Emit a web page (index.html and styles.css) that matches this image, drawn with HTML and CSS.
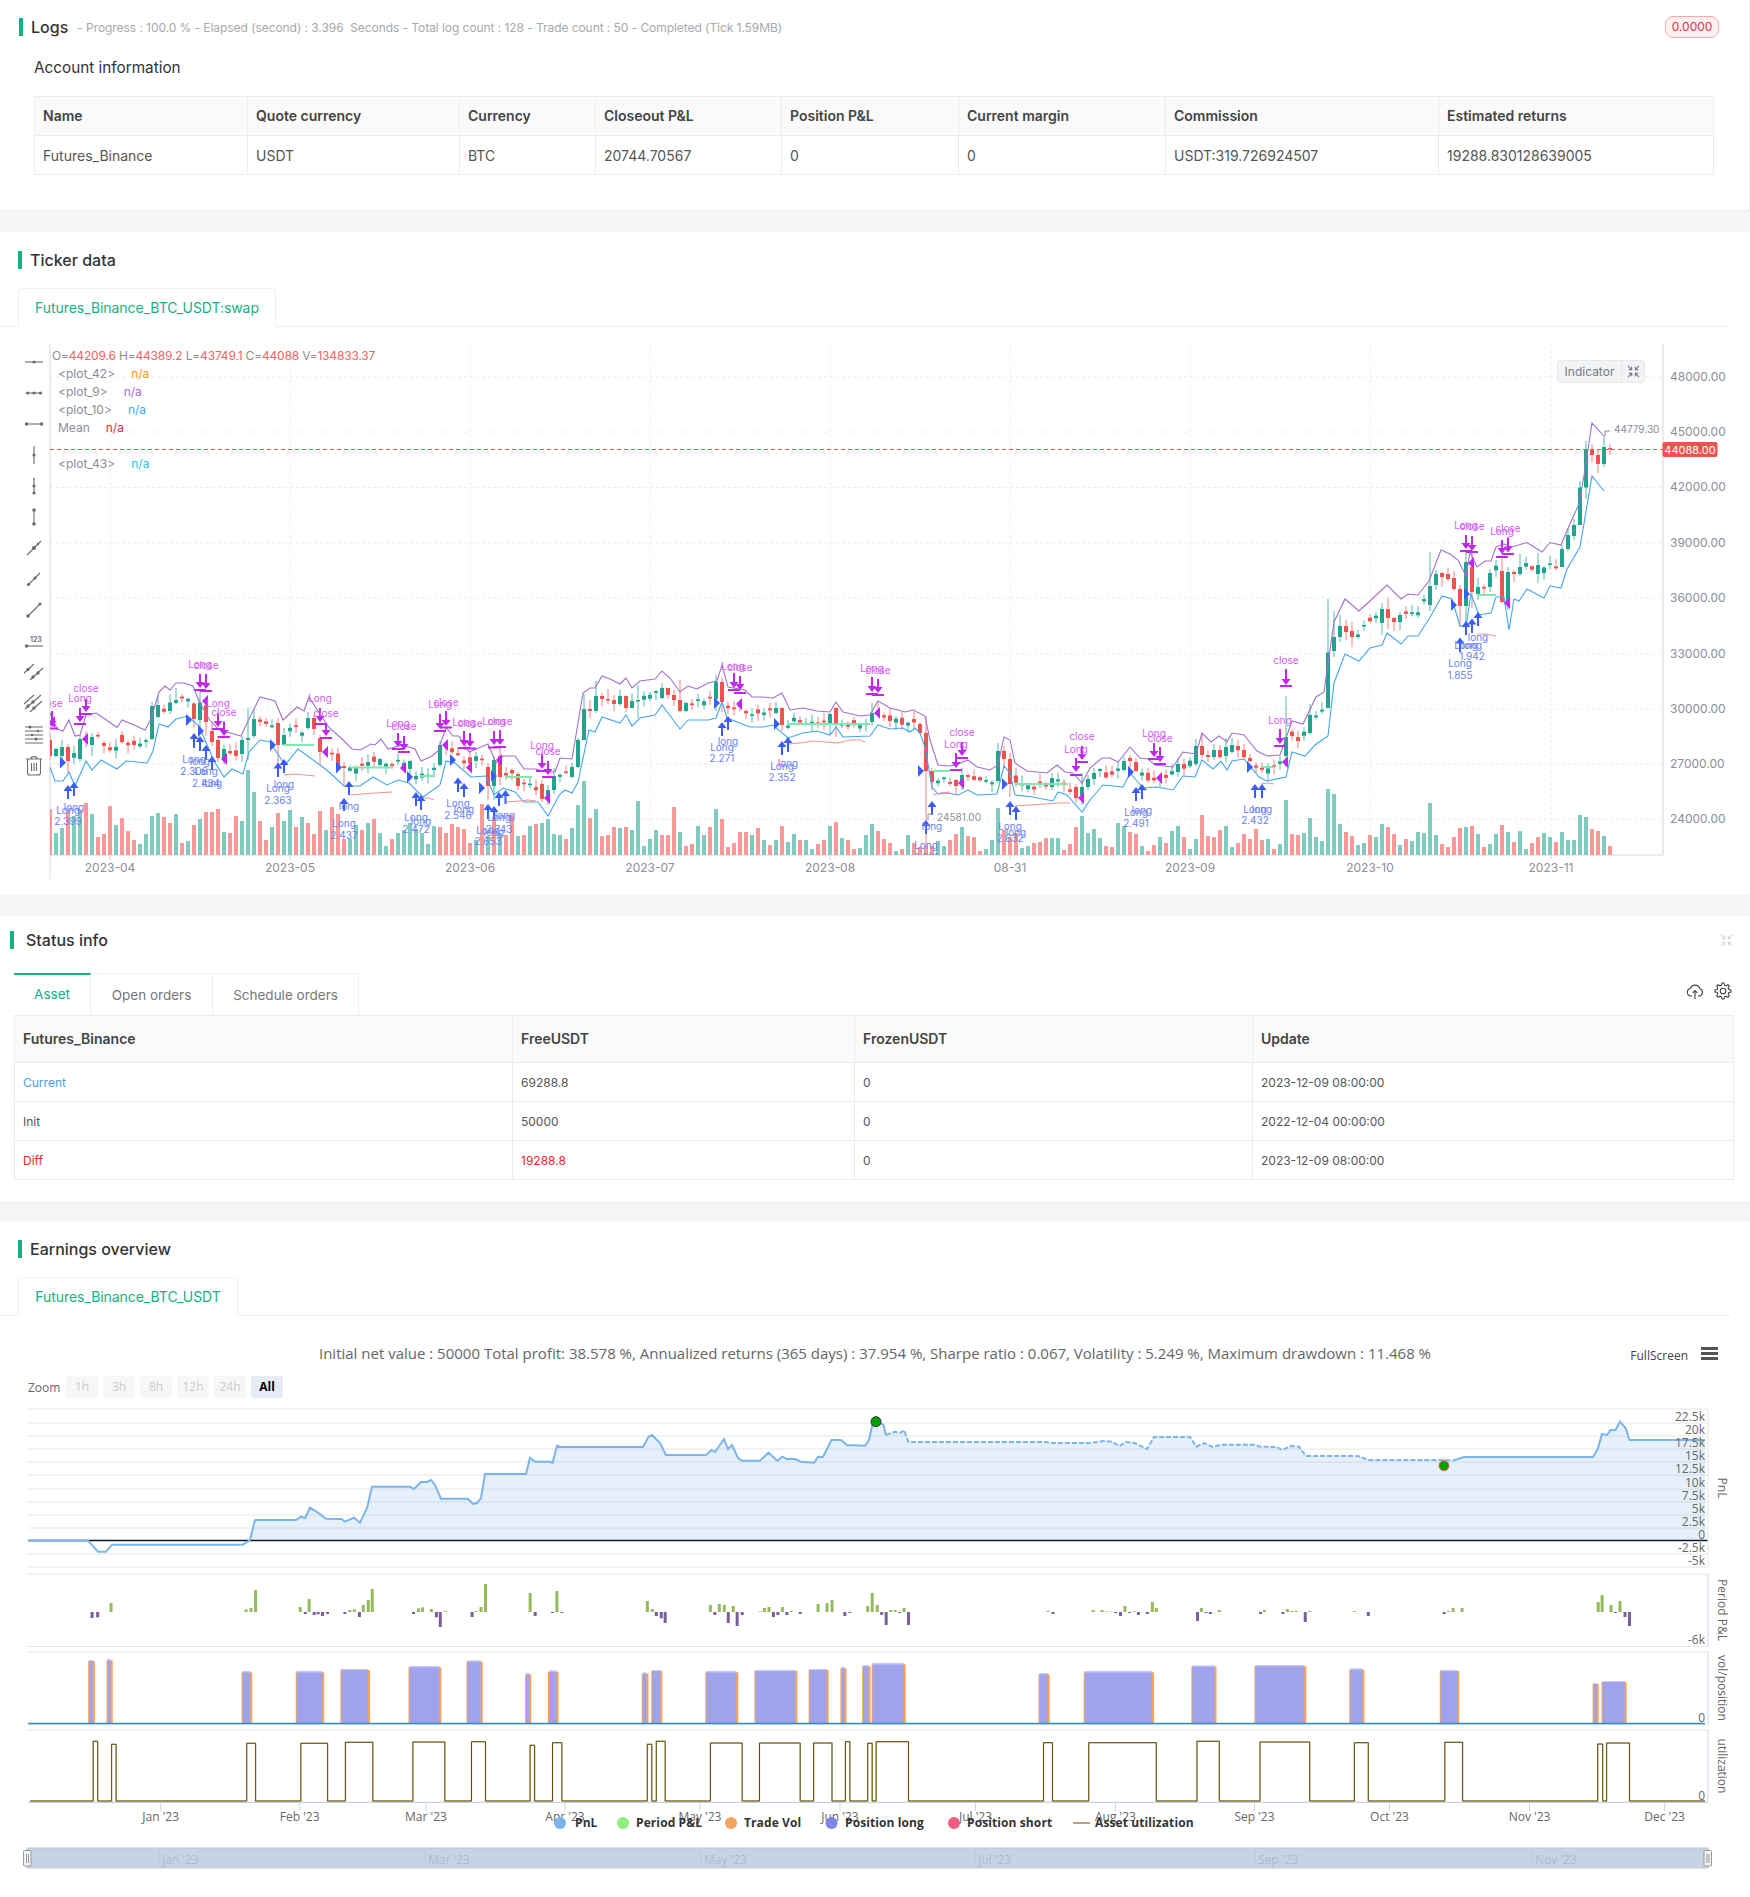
FILE: index.html
```html
<!DOCTYPE html>
<html lang="en">
<head>
<meta charset="utf-8">
<title>Backtest result</title>
<link rel="stylesheet" href="styles.css">
</head>
<body>
<section class="card card-logs">
  <div class="head">
    <span class="bar"></span>
    <h2 class="title">Logs</h2>
    <span class="progress">- Progress : 100.0 % - Elapsed (second) : 3.396 &nbsp;Seconds - Total log count : 128 - Trade count : 50 - Completed (Tick 1.59MB)</span>
    <span class="badge">0.0000</span>
  </div>
  <h3 class="sub">Account information</h3>
  <table class="grid account">
    <colgroup><col class="a1"><col class="a2"><col class="a3"><col class="a4"><col class="a5"><col class="a6"><col class="a7"><col class="a8"></colgroup>
    <thead><tr><th>Name</th><th>Quote currency</th><th>Currency</th><th>Closeout P&amp;L</th><th>Position P&amp;L</th><th>Current margin</th><th>Commission</th><th>Estimated returns</th></tr></thead>
    <tbody><tr><td>Futures_Binance</td><td>USDT</td><td>BTC</td><td>20744.70567</td><td>0</td><td>0</td><td>USDT:319.726924507</td><td>19288.830128639005</td></tr></tbody>
  </table>
</section>

<section class="card card-ticker">
  <div class="head"><span class="bar"></span><h2 class="title">Ticker data</h2></div>
  <div class="tabline"><span class="tab tab-ticker">Futures_Binance_BTC_USDT:swap</span></div>
  <div class="kline">
    <svg id="kline-svg" class="chart-svg" viewBox="0 340 1750 555" width="1750" height="555"></svg>
    <div class="tools">
      <svg class="tool" viewBox="0 0 24 24"><path d="M3 12H21"/><circle cx="12" cy="12" r="1.6"/></svg>
      <svg class="tool" viewBox="0 0 24 24"><path d="M4 12H20"/><circle cx="5.5" cy="12" r="1.6"/><circle cx="12" cy="12" r="1.6"/><circle cx="18.5" cy="12" r="1.6"/></svg>
      <svg class="tool" viewBox="0 0 24 24"><path d="M4 12H20"/><circle cx="4.5" cy="12" r="1.8"/><circle cx="19.5" cy="12" r="1.8"/></svg>
      <svg class="tool" viewBox="0 0 24 24"><path d="M12 3V21"/><circle cx="12" cy="12" r="1.6"/></svg>
      <svg class="tool" viewBox="0 0 24 24"><path d="M12 4V20"/><circle cx="12" cy="12" r="1.6"/><circle cx="12" cy="19" r="1.6"/><circle cx="12" cy="5" r="0.8"/></svg>
      <svg class="tool" viewBox="0 0 24 24"><path d="M12 5V19"/><circle cx="12" cy="5" r="1.8"/><circle cx="12" cy="19" r="1.8"/></svg>
      <svg class="tool" viewBox="0 0 24 24"><path d="M5 19L19 5"/><circle cx="12" cy="12" r="2"/><circle cx="16" cy="8" r="1.2"/></svg>
      <svg class="tool" viewBox="0 0 24 24"><path d="M6 18L18 6"/><circle cx="6.500" cy="17.500" r="1.600"/><circle cx="13" cy="11" r="1.600"/></svg>
      <svg class="tool" viewBox="0 0 24 24"><path d="M6 18L18 6"/><circle cx="6" cy="18" r="1.800"/><circle cx="18" cy="6" r="1.500"/></svg>
      <svg class="tool" viewBox="0 0 24 24"><path d="M4 17H21"/><circle cx="4.5" cy="17" r="1.7"/><text class="tool-text" x="8" y="13">123</text></svg>
      <svg class="tool" viewBox="0 0 24 24"><path d="M2 13L12 4M8 20L21 8"/><circle cx="6" cy="9.500" r="1.700"/><circle cx="11" cy="17" r="1.700"/><circle cx="16" cy="13" r="1.700"/></svg>
      <svg class="tool" viewBox="0 0 24 24"><path d="M2 13L12 4M3 18L19 4M8 21L20 10"/><circle cx="6" cy="15" r="1.700"/><circle cx="11" cy="11" r="1.700"/><circle cx="12" cy="17" r="1.700"/></svg>
      <svg class="tool" viewBox="0 0 24 24"><path d="M3 5H21M3 9H21M3 13H21M3 17H21M3 21H21"/><circle cx="8" cy="5" r="1.5"/><circle cx="16" cy="9" r="1.2"/><circle cx="10" cy="13" r="1.2"/><circle cx="14" cy="17" r="1.5"/></svg>
      <svg class="tool" viewBox="0 0 24 24"><path d="M4 6H20M9 5.500C9 3 15 3 15 5.500M5.500 6.500V20Q5.500 22 8 22H16Q18.500 22 18.500 20V6.500M9.500 10V18M12 10V18M14.500 10V18"/></svg>
    </div>
    <div class="legend">
      <div class="ohlc">O=<b>44209.6</b> H=<b>44389.2</b> L=<b>43749.1</b> C=<b>44088</b> V=<b>134833.37</b></div>
      <div class="plot">&lt;plot_42&gt;<em class="c-orange">n/a</em></div>
      <div class="plot">&lt;plot_9&gt;<em class="c-purple">n/a</em></div>
      <div class="plot">&lt;plot_10&gt;<em class="c-blue">n/a</em></div>
      <div class="plot">Mean<em class="c-pink">n/a</em></div>
      <div class="plot plot-gap">&lt;plot_43&gt;<em class="c-teal">n/a</em></div>
    </div>
    <div class="indicator">
      <span class="ind-label">Indicator</span>
      <span class="ind-icon"><svg class="expand" viewBox="0 0 14 14"><path d="M1 1L5 5M5 2V5H2M13 1L9 5M9 2V5H12M1 13L5 9M5 12V9H2M13 13L9 9M9 12V9H12"/></svg></span>
    </div>
  </div>
</section>

<section class="card card-status">
  <div class="head head-status">
    <span class="bar"></span><h2 class="title">Status info</h2>
    <svg class="expand expand-light" viewBox="0 0 14 14"><path d="M1 1L5 5M5 2V5H2M13 1L9 5M9 2V5H12M1 13L5 9M5 12V9H2M13 13L9 9M9 12V9H12"/></svg>
  </div>
  <div class="status-tabs">
    <span class="stab stab-on">Asset</span><span class="stab stab-open">Open orders</span><span class="stab stab-sched">Schedule orders</span>
    <span class="status-icons">
      <svg class="act" viewBox="0 0 18 18"><path d="M6 14H5A3.800 3.800 0 0 1 4.300 6.500 5 5 0 0 1 13.800 6.600 3.800 3.800 0 0 1 13 14H12M9 17V8.500M6.800 10.800L9 8.500 11.200 10.800"/></svg>
      <svg class="act" viewBox="0 0 18 18"><path d="M8 1H10L10.500 3.200 12 3.800 14 2.700 15.300 4 14.200 6 14.800 7.500 17 8V10L14.800 10.500 14.200 12 15.300 14 14 15.300 12 14.200 10.500 14.800 10 17H8L7.500 14.800 6 14.200 4 15.300 2.700 14 3.800 12 3.200 10.500 1 10V8L3.200 7.500 3.800 6 2.700 4 4 2.700 6 3.800 7.500 3.200Z"/><circle cx="9" cy="9" r="2.800"/></svg>
    </span>
  </div>
  <table class="grid status">
    <colgroup><col class="s1"><col class="s2"><col class="s3"><col class="s4"></colgroup>
    <thead><tr><th>Futures_Binance</th><th>FreeUSDT</th><th>FrozenUSDT</th><th>Update</th></tr></thead>
    <tbody>
      <tr><td class="c-link">Current</td><td>69288.8</td><td>0</td><td>2023-12-09 08:00:00</td></tr>
      <tr><td>Init</td><td>50000</td><td>0</td><td>2022-12-04 00:00:00</td></tr>
      <tr><td class="c-red">Diff</td><td class="c-red">19288.8</td><td>0</td><td>2023-12-09 08:00:00</td></tr>
    </tbody>
  </table>
</section>

<section class="card card-earn">
  <div class="head"><span class="bar"></span><h2 class="title">Earnings overview</h2></div>
  <div class="tabline"><span class="tab tab-earn">Futures_Binance_BTC_USDT</span></div>
  <div class="summary">
    <span></span>
    <span class="summary-text">Initial net value : 50000 Total profit: 38.578 %, Annualized returns (365 days) : 37.954 %, Sharpe ratio : 0.067, Volatility : 5.249 %, Maximum drawdown : 11.468 %</span>
    <span class="fullscreen">FullScreen<span class="burger"><i></i><i></i><i></i></span></span>
  </div>
  <div class="zoom">
    <span class="zoom-label">Zoom</span>
    <span class="zbtn">1h</span><span class="zbtn">3h</span><span class="zbtn">8h</span><span class="zbtn">12h</span><span class="zbtn">24h</span><span class="zbtn zbtn-on">All</span>
  </div>
  <svg id="earn-svg" class="chart-svg" viewBox="0 1399 1750 497" width="1750" height="497"></svg>
</section>
<script src="chart.js"></script>
</body>
</html>
```
FILE: styles.css
```css
* { box-sizing: border-box; }
html, body { margin: 0; padding: 0; }
body { background: #f4f5f7; font-family: Inter, "Noto Sans", sans-serif; color: #444; width: 1750px; }
.card { background: #fff; border-bottom: 1px solid #eef0f2; }
.card-logs { height: 211px; padding-top: 18px; margin-bottom: 21px; border-right: 1px solid #eee; }
.card-ticker { height: 663px; padding-top: 19px; margin-bottom: 21px; border-bottom: 0; }
.card-status { height: 285px; padding-top: 15px; margin-bottom: 20px; border-bottom: 0; }
.card-earn { height: 676px; padding-top: 19px; border-bottom: 0; }
.head { display: flex; align-items: center; height: 18px; padding-left: 18px; gap: 8px; }
.card-logs .head { padding-left: 19px; padding-right: 30px; }
.head-status { padding-left: 10px; gap: 12px; padding-right: 17px; }
.bar { width: 4px; height: 18px; background: #14b184; flex: none; }
.title { margin: 0; font-size: 16px; font-weight: 500; color: #333; line-height: 18px; }
.progress { font-size: 12px; color: #a8a8a8; margin-left: 1px; white-space: pre; letter-spacing: -0.06px; }
.badge { margin-left: auto; height: 22px; width: 54px; border: 1px solid #ffa8a8; background: #fff1f0; border-radius: 8px; color: #e8304a; font-size: 12px; line-height: 20px; text-align: center; }
.sub { margin: 20px 0 16px 34px; font-size: 15.300px; font-weight: 400; line-height: 24px; color: #333; }
.grid { border-collapse: collapse; table-layout: fixed; font-size: 14px; color: #555; }
.grid th { background: #fafafa; text-align: left; font-weight: 600; color: #444; padding-bottom: 2px; }
.grid th, .grid td { border: 1px solid #ececec; padding-left: 8px; padding-right: 8px; white-space: nowrap; }
.account { margin-left: 34px; width: 1679px; }
.account th, .account td { height: 39px; }
.a1 { width: 213px; } .a2 { width: 212px; } .a3 { width: 136px; } .a4 { width: 186px; }
.a5 { width: 177px; } .a6 { width: 207px; } .a7 { width: 273px; } .a8 { width: 275px; }
.tabline { margin: 19px 20px 0 0; padding-left: 18px; height: 39px; border-bottom: 1px solid #eaecef; display: flex; }
.tab { height: 39px; border: 1px solid #eef0f2; border-bottom: 1px solid #fff; border-radius: 4px 4px 0 0; color: #14b184; font-size: 14px; line-height: 37px; text-align: center; letter-spacing: -0.07px; }
.tab-ticker { width: 258px; }
.tab-earn { width: 220px; }
.kline { position: relative; height: 555px; margin-top: 13px; }
.chart-svg { display: block; }
.tools { position: absolute; left: 22px; top: 10px; display: flex; flex-direction: column; }
.tool { width: 24px; height: 24px; margin-bottom: 7px; fill: none; stroke: #686b75; stroke-width: 1.100; }
.tool circle { fill: #686b75; stroke: none; }
.tool-text { font-family: Inter, sans-serif; font-size: 7px; font-weight: 600; fill: #686b75; stroke: none; }
.legend { position: absolute; left: 52px; top: 7px; font-size: 12px; line-height: 18px; color: #8a8e97; }
.ohlc { height: 18px; white-space: nowrap; letter-spacing: -0.17px; }
.ohlc b { font-weight: 400; color: #f26461; }
.plot { height: 18px; padding-left: 6px; display: flex; gap: 16px; }
.plot em { font-style: normal; }
.plot-gap { margin-top: 18px; }
.c-orange { color: #ff9800; } .c-purple { color: #a66cd6; } .c-blue { color: #42a5f5; } .c-pink { color: #e91e63; } .c-teal { color: #26c6da; }
.indicator { position: absolute; left: 1557px; top: 20px; width: 88px; height: 23px; display: flex; background: #f2f3f5; border: 1px solid #e6e8eb; border-radius: 4px; font-size: 12px; color: #787b86; }
.ind-label { width: 64px; line-height: 21px; text-align: center; border-right: 1px solid #e6e8eb; }
.ind-icon { flex: 1; display: flex; align-items: center; justify-content: center; }
.expand { width: 13px; height: 13px; fill: none; stroke: #787b86; stroke-width: 1.200; }
.expand-light { margin-left: auto; stroke: #d5d7db; }
.status-tabs { display: flex; margin: 24px 0 0 14px; height: 42px; width: 1719px; align-items: stretch; }
.stab { width: 122px; border: 1px solid #eef0f2; border-left: 0; border-bottom: 0; font-size: 13.500px; line-height: 42px; color: #777; text-align: center; }
.stab-sched { width: 146px; }
.stab-on { width: 77px; color: #14b184; border-top: 2px solid #14b184; border-left: 0; line-height: 39px; }
.status-icons { margin-left: auto; display: flex; align-items: center; gap: 10px; padding-right: 1px; margin-top: -6px; }
.act { width: 18px; height: 18px; fill: none; stroke: #444; stroke-width: 1.100; }
.status { margin-left: 14px; width: 1719px; font-size: 12px; }
.status th { height: 47px; font-size: 14px; }
.status td { height: 39px; }
.s1 { width: 498px; } .s2 { width: 342px; } .s3 { width: 398px; } .s4 { width: 481px; }
.c-link { color: #4b9cf0; }
.c-red { color: #f5222d; }
.summary { display: grid; grid-template-columns: 1fr auto 1fr; align-items: center; height: 40px; margin-top: 17px; margin-bottom: 1px; font-family: "Open Sans", sans-serif; }
.summary-text { font-size: 15px; color: #666; white-space: nowrap; }
.fullscreen { justify-self: end; display: flex; align-items: center; gap: 13px; padding-right: 32px; font-size: 12px; color: #444; margin-top: 5px; }
.burger { display: flex; flex-direction: column; gap: 2px; width: 17px; margin-top: -4px; }
.burger i { display: block; height: 3px; background: #555; }
.zoom { display: flex; align-items: center; gap: 5px; height: 22px; margin: 3px 0 1px 28px; font-family: "Open Sans", sans-serif; font-size: 12px; }
.zoom-label { width: 33px; color: #666; }
.zbtn { width: 32px; height: 22px; background: #f7f7f7; color: #ccc; line-height: 22px; text-align: center; border-radius: 2px; }
.zbtn-on { background: #e6ebf5; color: #000; font-weight: 700; }
.price-text { font-family: Inter, sans-serif; font-size: 12px; fill: #8a8e97; }
.mk-text { font-family: Inter, sans-serif; font-size: 10px; text-anchor: middle; }
.mk-buy { fill: #6a82f8; }
.mk-sell { fill: #d25cf2; }
.last-text { font-family: Inter, sans-serif; font-size: 11px; fill: #fff; text-anchor: middle; }
.hi-text { font-family: Inter, sans-serif; font-size: 10px; fill: #8a8e97; }
.hc-label { font-family: "Open Sans", sans-serif; font-size: 12px; fill: #666; }
.hc-end { text-anchor: end; }
.hc-mid { text-anchor: middle; }
.hc-title { font-family: "Open Sans", sans-serif; font-size: 12px; fill: #666; text-anchor: middle; }
.hc-nav { font-family: "Open Sans", sans-serif; font-size: 12px; fill: #aebbcd; }
.hc-legend { font-family: "Open Sans", sans-serif; font-size: 12px; font-weight: 700; fill: #333; letter-spacing: 0.1px; }
```
FILE: chart.js
```js
(function () {
  var pts = function (s) { return s.trim().split(/\s+/).map(function (p) { var a = p.split(','); return [+a[0], +a[1]]; }); };
  var interp = function (P, x) {
    if (x <= P[0][0]) return P[0][1];
    for (var k = 1; k < P.length; k++) if (x <= P[k][0]) {
      var a = P[k - 1], b = P[k];
      return a[1] + (b[1] - a[1]) * (x - a[0]) / ((b[0] - a[0]) || 1);
    }
    return P[P.length - 1][1];
  };
  var poly = function (P) { return P.map(function (p) { return p[0] + ',' + p[1]; }).join(' '); };
  var seed = 12345;
  var rnd = function () { seed = (seed * 16807) % 2147483647; return seed / 2147483647; };

  /* ---------- candlestick chart ---------- */
  var upper = pts('50,713 57,729 63,731 69,720 75,736 80,735 86,715 96,713 105,719 117,727.5 122,720 134,725 145,730 151,719 159,692 165,686 170,690 176,683 184,683 193,686 199,701 209,719 218,729 230,733 241,736 249,719 260,697 275,701 283,720 297,707 304,711 309,697 316,708 329,727.5 341,738 352,749 360,750 371,744 375,745 381,739 388,749 402,745 415,749 421,761 432,756 438,751 446,727.5 453,736 459,736 469,752 488,744 496,763 503,756 515,756 524,769 536,769 547,772 555,772 560,758 572,759 583,693 590,688 595,688 602,676 610,679 620,684 626,678 632,688 640,681 655,679 662,671 670,678 680,692 688,686 697,689 708,683 717,681 722,665 728,687 745,690 752,697 763,697 773,698 782,693 790,710 803,708 817,711 830,712 836,702 843,712 860,716 870,715 878,701 890,708 898,710 905,712 913,710 925,716 930,740 938,765 950,766 958,764 968,760 977,767 990,770 998,765 1004,737 1010,740 1015,763 1027,771 1047,773 1057,765 1065,772 1073,773 1082,783 1090,768 1102,758 1110,758 1118,762 1130,747 1140,758 1148,759 1155,765 1173,767 1183,752 1196,754 1202,733 1211,742 1219,736 1227,742 1232,733 1244,735 1257,751 1267,756 1280,755 1292,721 1303,724 1316,697 1324,692 1334,622 1345,599 1359,611 1370,601 1387,585 1401,599 1408,594 1418,595 1429,581 1441,550 1450,554 1458,560 1466,576 1470,552 1477,567 1485,561 1491,561 1496,547 1504,544 1512,547 1527,542.5 1542,552 1550,542.5 1561,545 1569,526 1579,504 1584,476 1592,423 1604,436');
  var lower = pts('50,767 55,781 63,781 69,772 75,786 86,761 92,770 101,760 117,769 126,761 147,763 153,751 159,724 168,727 176,719 188,716 199,726 214,761 224,777 232,769 243,774 249,752 260,740 270,742 285,765 298,749 320,765 329,772 344,786 360,786 373,777 387,785 398,780 409,783 423,797 440,785 446,761 455,763 471,777 486,776 494,795 503,788 515,792 524,802 538,802 548,816 560,794 565,790 572,793 578,782 589,730 595,732 602,717 620,723 626,715 632,726 640,718 655,715 662,705 680,729 688,720 708,720 716,718 722,702 727,718 750,727 763,727 773,725 788,738 803,733 817,731 830,735 836,727 843,737 870,736 878,725 890,729 903,728 910,732 915,728 920,733 925,747 932,787 938,794 948,793 958,795 968,790 977,795 997,794 1004,766 1010,773 1015,795 1033,797 1053,801 1058,792 1067,795 1082,812 1090,800 1103,785 1123,787 1130,773 1143,788 1157,787 1173,790 1183,776 1195,777 1202,760 1213,769 1221,761 1227,770 1232,761 1244,759 1259,777 1267,781 1286,777 1292,752 1305,756 1315,745 1328,736 1334,683 1345,654 1359,661 1370,648 1382,645 1387,633 1401,644 1408,636 1418,636 1429,619 1442,596 1452,599 1460,626 1466,626 1471,594 1479,615 1491,613 1496,597 1504,597 1509,630 1514,599 1519,601 1527,589 1544,598 1550,586 1561,588 1567,569 1580,547 1592,476 1604,491');
  var vols = ('46r,22g,27g,44r,39g,45g,52r,41g,18r,21r,49r,30g,37r,24r,15r,11g,21g,39g,42g,38r,32r,41g,12r,14g,30r,36g,43r,43r,46r,23g,22r,39r,34g,85g,63g,34r,15r,28g,42r,34g,45g,28r,38g,32r,21r,44r,25g,48r,41r,16r,16g,30g,25r,32g,36r,22g,9g,16r,22g,25g,32g,26g,22g,11g,29g,28r,22r,31r,28r,26r,12r,15g,51r,19g,38r,22g,20r,40r,19g,20r,29g,31r,32g,36g,21g,20g,' +
    '16r,27g,50g,74g,37r,46g,19r,20r,28r,27g,28r,25g,54g,9g,16g,25g,20r,20r,48r,23g,9r,11r,29g,20g,28r,46g,36r,8r,12r,23r,23r,20g,27r,15g,10r,15g,29r,13g,21g,15r,15g,6g,11r,15r,29g,33r,17g,15r,6r,7g,20g,31g,24r,16r,12r,4g,' +
    '6r,20g,12r,8r,9r,9r,14g,9g,15r,21r,28g,19r,18r,4r,6g,15g,47g,25r,18r,22r,7g,9g,12r,13r,17r,17g,17g,5r,11r,28r,39g,22g,26g,17g,9r,8r,32g,29g,23r,21r,9g,4r,10r,18g,12r,24g,29g,18r,6g,16g,40r,19r,18r,25r,29g,' +
    '8g,12r,21r,16r,26r,15r,16g,6r,11g,55g,21r,20r,22g,37g,18g,14g,66g,61g,31g,23r,19r,10g,12g,20r,18g,31g,28r,21r,10g,16r,14g,23g,22g,52g,20g,11r,8r,18r,27r,28g,29r,21g,8r,11g,21g,30r,23g,13r,24g,6g,12r,18r,22g,18g,13r,23g,15g,15g,40g,38g,26r,24r,19g,9r').split(',');
  var big = {
    0:[740,756,733,760,'r'],2:[747,756,740,762,'g'],3:[747,761,744,772,'r'],5:[739,759,735,762,'g'],7:[737,745,733,756,'g'],
    17:[706,739,702,740,'g'],18:[705,717,696,718,'g'],20:[702.5,711,694,714,'g'],21:[700,703,688,704,'g'],
    24:[703.5,719,702,728,'r'],25:[702.5,720,690,732,'g'],26:[705,722,702,736,'r'],27:[731,742,722,746,'r'],28:[740,758,736,762,'r'],29:[749,758,745,764,'g'],
    32:[740,754,736,762,'g'],33:[738,740,708,760,'g'],34:[719,736,709,738,'g'],38:[723,745,718,765,'r'],39:[735,745,728,746,'g'],
    44:[718,729,715,735,'r'],43:[718,728,712,730,'g'],45:[738,752,735,765,'r'],48:[753.500,767,748,770,'r'],49:[766,768,762,785,'r'],
    65:[745,765,741,767,'g'],73:[767,786,763,800,'r'],74:[760,786,756,800,'g'],75:[756,777,747,785,'r'],78:[774,786,772,790,'r'],
    82:[784,799,780,802,'r'],83:[790,799,785,805,'g'],84:[776,790,768,794,'g'],
    87:[767,777,763,778,'g'],88:[740,767,738,768,'g'],89:[709,740,694,740,'g'],90:[709,711,700,718,'r'],91:[696,711,681,713,'g'],
    92:[696,699,693,706,'r'],93:[699,700,689,704,'r'],94:[700,704,695,711,'r'],95:[696,704,690,706,'g'],96:[696,708,696,712,'r'],97:[701,708,693,708,'g'],98:[700,701,685,718,'g'],
    102:[688,698,683,699,'g'],103:[688,695,688,699,'r'],104:[695,700,690,706,'r'],105:[700,711,680,712,'r'],106:[703,711,702,712,'g'],
    111:[682,699,675,711,'g'],112:[682,702,678,712,'r'],121:[708,713,702,714,'g'],122:[708,725,707,731,'r'],130:[714,723,713,735,'g'],131:[708,723,707,737,'r'],137:[713,722,703,726,'g'],
    145:[724,733,722,734,'r'],146:[733,771,716,853,'r'],147:[771,782,768,790,'r'],151:[780,786,779,795,'r'],152:[775,781,768,790,'g'],
    158:[751,781,743,783,'g'],159:[751,759,746,766,'r'],160:[759,784,753,797,'r'],167:[778,787,773,790,'g'],171:[787,798,784,803,'r'],172:[787,795,773,805,'g'],173:[779,787,775,790,'g'],174:[773,779,768,785,'g'],
    179:[761,770,757,772,'g'],180:[758,761,755,770,'r'],181:[762,771,758,772,'r'],188:[764,772,758,777,'g'],191:[746,764,739,766,'g'],192:[746,755,733,758,'r'],193:[755,757,750,762,'r'],194:[750,757,744,760,'g'],195:[750,757,745,759,'r'],196:[747,756,738,762,'g'],
    206:[737,756,696,767,'g'],210:[715,733,704,735,'g'],213:[652.500,708,599,708,'g'],214:[637,651,611,657,'g'],215:[626,637,615,642,'g'],216:[626,632,620,640,'r'],217:[631,637,622,647,'r'],
    222:[609,623,603,635,'g'],223:[609,618,598,629,'r'],224:[618,622,617,631,'r'],225:[615,622,612,630,'g'],230:[586,605,552,611,'g'],231:[574,585,570,590,'g'],232:[573,577,572,587,'r'],234:[578,589,571,591,'r'],235:[589,606,585,627,'r'],236:[562,606,551,622,'g'],237:[567,592,552,608,'r'],238:[587,594,578,600,'g'],240:[573,587,569,592,'g'],242:[571,602,556,603,'r'],243:[572,601,567,610,'g'],244:[572,574,570,582,'r'],245:[567,574,554,576,'g'],248:[565,574,553,583,'g'],
    252:[549,567,545,567,'g'],253:[535,549,528,551,'g'],254:[525,536,519,540,'g'],255:[487.500,525,481,525,'g'],256:[449,487.500,441,499,'g'],257:[449,455,444,462,'r'],258:[455,464,449,473,'r'],259:[447,464,436,467,'g'],260:[448,449,444,455,'r']
  };
  var s = '';
  var C = { g: '#22a38f', r: '#ef5350', gw: '#8dd0c5', rw: '#f8abaa', gv: '#80cbc0', rv: '#f79a97' };
  s += '<defs><clipPath id="cp"><rect x="50" y="344" width="1613" height="511"/></clipPath></defs>';
  var ticksY = [['48000.00',377],['45000.00',432],['42000.00',487.5],['39000.00',543],['36000.00',598],['33000.00',654],['30000.00',709],['27000.00',764],['24000.00',819]];
  var ticksX = [['2023-04',110],['2023-05',290],['2023-06',470],['2023-07',650],['2023-08',830],['08-31',1010],['2023-09',1190],['2023-10',1370],['2023-11',1551]];
  ticksY.forEach(function (t) {
    s += '<line x1="50" x2="1663" y1="' + t[1] + '" y2="' + t[1] + '" stroke="#ececec" stroke-dasharray="3 3"/>';
    s += '<text class="price-text" x="1670" y="' + (t[1] + 3.5) + '">' + t[0] + '</text>';
  });
  ticksX.forEach(function (t) {
    s += '<line x1="' + t[1] + '" x2="' + t[1] + '" y1="344" y2="855" stroke="#ececec" stroke-dasharray="3 3"/>';
    s += '<line x1="' + t[1] + '" x2="' + t[1] + '" y1="855" y2="860" stroke="#d5d7db"/>';
    s += '<text class="price-text hc-mid" x="' + t[1] + '" y="872">' + t[0] + '</text>';
  });
  s += '<line x1="50" x2="50" y1="344" y2="879" stroke="#d5d7db"/><line x1="1663" x2="1663" y1="344" y2="855" stroke="#d5d7db"/><line x1="50" x2="1663" y1="855" y2="855" stroke="#d5d7db"/>';
  s += '<g clip-path="url(#cp)">';
  vols.forEach(function (v, i) {
    var h = parseInt(v, 10), d = v.slice(-1), x = 50 + 6 * i;
    s += '<rect x="' + (x - 2) + '" y="' + (855 - h) + '" width="4" height="' + h + '" fill="' + C[d + 'v'] + '"/>';
  });
  vols.forEach(function (v, i) {
    var x = 50 + 6 * i, c = big[i], d = v.slice(-1);
    if (!c) {
      var m = (interp(upper, x + 3) + interp(lower, x + 3)) / 2 + (rnd() - 0.5) * 7;
      var h = 1.5 + rnd() * rnd() * 7;
      c = [m - h / 2, m + h / 2, m - h / 2 - 1 - rnd() * 7, m + h / 2 + 1 + rnd() * 7, d];
    }
    d = c[4];
    s += '<line x1="' + x + '" x2="' + x + '" y1="' + c[2] + '" y2="' + c[3] + '" stroke="' + C[d + 'w'] + '" stroke-width="1.5"/>';
    s += '<rect x="' + (x - 2) + '" y="' + c[0] + '" width="4" height="' + Math.max(c[1] - c[0], 1.5) + '" fill="' + C[d] + '"/>';
  });
  s += '<polyline points="' + poly(upper) + '" fill="none" stroke="#a06fd0" stroke-width="1.1"/>';
  s += '<polyline points="' + poly(lower) + '" fill="none" stroke="#42a5f5" stroke-width="1.1"/>';
  [[283,314,745],[350,392,767.5],[420,434,776],[505,532,777],[787,870,724],[933,950,771],[1015,1068,784],[1261,1274,767],[1477,1496,595]].forEach(function (g) {
    s += '<line x1="' + g[0] + '" x2="' + g[1] + '" y1="' + g[2] + '" y2="' + g[2] + '" stroke="#7feab0" stroke-width="2"/>';
  });
  ['284,775 295,774 305,775 315,776','350,795 362,794 375,793 392,792','421,798 428,798 434,800','506,802 520,801 528,800 536,801','788,744 800,743 812,741 825,742 838,743 850,740 860,740 865,742','933,795 940,793 950,792','1015,806 1030,805 1045,804 1060,803 1070,803','1142,790 1147,790','1261,784 1268,783 1274,784','1478,634 1486,634 1496,636'].forEach(function (r) {
    s += '<polyline points="' + r + '" fill="none" stroke="#f88f8f" stroke-width="1"/>';
  });
  var ups = [[68,785,799],[74,782,796],[194,733,748],[200,736,751],[206,745,760],[212,756,770],[278,762.5,777],[284,759,773],[344,798,811],[349,781,795],[416,792,806],[421,795,810],[458,777.5,792],[464,783,797],[488,804,819],[494,806,820],[499,792,806],[505.5,790,804],[722,722,736],[728,716,730],[782,741,755],[788,737,752],[926,820,834],[932,801,815],[1010,801,815],[1016,806,820],[1136,787,801],[1142,784,799],[1255,784,798],[1262,784,798],[1460,637.5,652],[1466,621,635],[1472,618.5,633],[1478,612,626]];
  ups.forEach(function (u) {
    s += '<line x1="' + u[0] + '" x2="' + u[0] + '" y1="' + (u[1] + 5) + '" y2="' + u[2] + '" stroke="#3a5cf8" stroke-width="2"/>';
    s += '<polygon points="' + u[0] + ',' + u[1] + ' ' + (u[0] - 4.5) + ',' + (u[1] + 6) + ' ' + (u[0] + 4.5) + ',' + (u[1] + 6) + '" fill="#3a5cf8"/>';
  });
  var downs = [[52,711,727,727.5],[80,708,722,723],[86,699,712,713],[200,674,688,689],[206,674,689,690],[218,713,727,728],[224,721.5,736,736],[320,708,722,723],[326,723,736,737],[398,733,747,748],[404,736,750,751],[440,714,729,730],[446,711,726,726.5],[464,731,746,747],[470,733,747,747.5],[494,731,745,746.5],[500,730,745,746],[542,754,769,770],[548,761,775,776],[734,673,688,689],[740,676,690,692],[872,677,692,693],[878,679,693,694],[956,753,768,769],[962,742,756,757],[1076,758,772,774],[1082,746,760,761],[1154,743,757,758],[1160,747,762,763],[1280,729,744,745],[1286,669,685,685],[1466,535,549,550],[1472,536,551,551],[1502,540,554,556],[1508,537.5,552.5,553]];
  downs.forEach(function (u) {
    s += '<line x1="' + u[0] + '" x2="' + u[0] + '" y1="' + u[1] + '" y2="' + (u[2] - 5) + '" stroke="#c026ec" stroke-width="2"/>';
    s += '<polygon points="' + u[0] + ',' + u[2] + ' ' + (u[0] - 4.5) + ',' + (u[2] - 6) + ' ' + (u[0] + 4.5) + ',' + (u[2] - 6) + '" fill="#c026ec"/>';
    s += '<rect x="' + (u[0] - 6) + '" y="' + u[3] + '" width="12" height="2" fill="#c026ec"/>';
  });
  [[63,762.5],[189,720],[201,731],[273,745],[339,767.5],[410,777],[453,760],[482,788],[494,776],[717,703],[777,724],[921,771],[1005,784],[1131,772],[1250,767],[1454,605],[1467,594]].forEach(function (t) {
    s += '<polygon points="' + (t[0] - 3) + ',' + (t[1] - 6) + ' ' + (t[0] + 3) + ',' + t[1] + ' ' + (t[0] - 3) + ',' + (t[1] + 6) + '" fill="#3a5cf8"/>';
  });
  [[52,722],[85,739],[205,701],[224,759],[325,752],[403,768],[445,745],[469,767.5],[499,760],[547,798],[739,704],[877,713],[961,783],[1081,798],[1159,778],[1285,762],[1471,563],[1507,603]].forEach(function (t) {
    s += '<polygon points="' + (t[0] + 3) + ',' + (t[1] - 6) + ' ' + (t[0] - 3) + ',' + t[1] + ' ' + (t[0] + 3) + ',' + (t[1] + 6) + '" fill="#c026ec"/>';
  });
  var buyT = [['long',74,807],['Long',68,810],['2.399',68,821],['Long',194,759],['2.306',194,771],['long',200,761],['Long',206,771],['2.434',206,783],['long',212,783],['long',284,784],['Long',278,788],['2.363',278,800],['long',349,806],['Long',344,823],['2.437',344,835],['Long',416,817],['long',421,821],['2.472',416,829],['Long',458,803],['long',464,809],['2.546',458,815],['Long',488,830],['2.653',488,841],['long',494,832],['Long',499,817],['2.743',499,829],['long',505,815],['long',728,741],['Long',722,747],['2.271',722,758],['long',788,763],['Long',782,766],['2.352',782,777],['long',932,826],['Long',926,845],['2.691',926,857],['Long',1010,826],['long',1016,832],['2.632',1010,838],['long',1142,810],['Long',1136,812],['2.491',1136,823],['Long',1255,809],['long',1262,809],['2.432',1255,820],['long',1478,637],['Long',1466,645],['long',1472,645],['1.942',1472,656],['Long',1460,663],['1.855',1460,675]];
  buyT.forEach(function (t) { s += '<text class="mk-text mk-buy" x="' + t[1] + '" y="' + (t[2] + 4) + '">' + t[0] + '</text>'; });
  var sellT = [['close',50,703],['Long',80,698],['close',86,688],['Long',200,664],['close',206,665],['Long',218,703],['close',224,712],['Long',320,698],['close',326,713],['Long',398,723],['close',404,726],['Long',440,704],['close',446,702],['Long',464,722],['close',470,723],['Long',494,721],['close',500,721],['Long',542,745],['close',548,751],['Long',733,666],['close',740,667],['Long',872,668],['close',878,670],['Long',956,744],['close',962,732],['Long',1076,749],['close',1082,736],['Long',1154,733],['close',1160,738],['Long',1280,720],['close',1286,660],['Long',1466,525],['close',1472,526],['Long',1502,531],['close',1508,528]];
  sellT.forEach(function (t) { s += '<text class="mk-text mk-sell" x="' + t[1] + '" y="' + (t[2] + 4) + '">' + t[0] + '</text>'; });
  s += '<path d="M1605 436V431H1610M928 820V814H933" fill="none" stroke="#8a8e97"/>';
  s += '<text class="hi-text" x="1614" y="433">44779.30</text><text class="hi-text" x="937" y="821">24581.00</text>';
  s += '</g>';
  s += '<line x1="50" x2="1663" y1="449.500" y2="449.500" stroke="#ef5350" stroke-dasharray="4 3"/>';
  s += '<rect x="1662.500" y="442" width="55" height="15" rx="2" fill="#ef5350"/><text class="last-text" x="1690" y="453.500">44088.00</text>';
  document.getElementById('kline-svg').innerHTML = s;

  /* ---------- earnings chart ---------- */
  var pnl = pts('28,1540.7 88,1540.7 98,1551.7 106,1551.7 112,1544.7 243,1544.7 250,1540 255,1520 296,1520 301,1516.7 305,1518 310,1507.7 318,1512.7 326,1518.7 341.5,1519 345,1521.7 354,1517.7 360,1522.7 367,1508 372,1486.7 410,1486.7 414,1489 421,1482 427,1482 431,1480 435,1485 441,1498.7 468,1498.7 473,1504 477,1503 481,1498 485,1474 526,1474 530,1457.7 535,1461.7 550,1461.7 552.5,1463 557,1445.7 561,1447 643,1447 648.5,1436.7 652,1435 660,1443 666,1455 706,1455 711.5,1450 715,1452 724,1439 728,1449 732,1445 738,1458 742,1460.7 760,1460.7 768.5,1452.7 777.5,1461 782,1456.7 787,1459 795,1459 801,1461.7 814,1462.7 818,1456.7 823,1457 831.5,1440 841,1440 847,1445 865,1445.7 869,1440 873,1421.7 878,1421.7 883.4,1425 886,1435 894.5,1431.7 901,1432.7 904,1430 908.5,1442 1045,1442 1052.5,1443 1090,1443 1104,1441 1112,1441.7 1119.4,1446 1126,1442 1134.5,1443 1147,1449 1154,1437 1190,1437 1196.4,1446.7 1204,1443 1212.6,1447 1221,1444.7 1254.5,1444.7 1260,1446.7 1277,1447 1282,1450 1291,1446 1299,1446.7 1306,1456 1358,1456 1368,1460 1444,1460 1452.6,1460.7 1464,1457 1593,1457 1597.7,1449 1602,1434 1607,1435 1610.5,1430 1615.5,1430 1620,1421.7 1625.6,1428 1629.5,1440 1705,1440');
  var e = '';
  var sub = function (a, b) { return pnl.filter(function (p) { return p[0] >= a && p[0] <= b; }); };
  [1409,1423,1436,1449,1462,1475,1489,1502,1515,1528,1554,1567].forEach(function (y) {
    e += '<line x1="28" x2="1708" y1="' + y + '" y2="' + y + '" stroke="#e6e6e6"/>';
  });
  var area = pnl.map(function (p) { return [p[0], Math.min(p[1], 1540.5)]; });
  e += '<polygon points="28,1540.5 ' + poly(area) + ' 1705,1540.5" fill="#7cb5ec" fill-opacity="0.2"/>';
  e += '<line x1="28" x2="1708" y1="1540.500" y2="1540.500" stroke="#0c1a2a" stroke-width="1.500"/>';
  e += '<polyline points="' + poly(sub(0, 886)) + '" fill="none" stroke="#7cb5ec" stroke-width="2"/>';
  e += '<polyline points="' + poly(sub(886, 1453)) + '" fill="none" stroke="#7cb5ec" stroke-width="2" stroke-dasharray="5 2"/>';
  e += '<polyline points="' + poly(sub(1452, 1800)) + '" fill="none" stroke="#7cb5ec" stroke-width="2"/>';
  e += '<circle cx="876" cy="1421.700" r="5" fill="#00a000" stroke="#333"/><circle cx="1444" cy="1465.700" r="5" fill="#00a000" stroke="#f25f5f"/>';
  [['22.5k',1417],['20k',1430],['17.5k',1443],['15k',1456],['12.5k',1469],['10k',1483],['7.5k',1496],['5k',1509],['2.5k',1522],['0',1535],['-2.5k',1548],['-5k',1561],['-6k',1640],['0',1718],['0',1796]].forEach(function (t) {
    e += '<text class="hc-label hc-end" x="1705" y="' + (t[1] + 4) + '">' + t[0] + '</text>';
  });
  [['PnL',1488],['Period P&amp;L',1610],['vol/position',1688],['utilization',1766]].forEach(function (t) {
    e += '<text class="hc-title" transform="translate(1718 ' + t[1] + ') rotate(90)">' + t[0] + '</text>';
  });
  [[1574,1646.5],[1652,1724.5],[1730,1802]].forEach(function (p) {
    e += '<line x1="28" x2="1708" y1="' + p[0] + '" y2="' + p[0] + '" stroke="#e6e6e6"/><line x1="28" x2="1708" y1="' + p[1] + '" y2="' + p[1] + '" stroke="#e6e6e6"/>';
    e += '<line x1="1708" x2="1708" y1="' + p[0] + '" y2="' + p[1] + '" stroke="#ccd6eb"/>';
  });
  e += '<line x1="1708" x2="1708" y1="1409" y2="1567" stroke="#e6e6e6"/>';
  /* period P&L */
  var toX1 = function (v) { return v / 1.792; }, toX2 = function (v) { return 875 + v / 1.792; };
  var bars1 = '165b144 175b142 199t99 441t118 450t114 458t60 538t111 547b132 554t87 563b135 570b133 578b138 587b132 618b132 627t120 635t118 644b141 651t105 660t90 667t57 741b132 750t115 757t112 773t117 782b142 789b171 798t123 846b141 853t123 862t111 870t42 950t69 959b138 990b129 998t63 1007b129 1160t93 1169t117 1176b138 1185b145 1192b159 1273t105 1281b135 1289t102 1298t105 1305b159 1314t108 1321b168 1330b135 1362t124 1370t114 1378t111 1386b141 1394b135 1402t111 1410b135 1418t123 1434b132 1466t102 1482t99 1491t90 1514b138 1523b129 1555t108 1563t69';
  var bars2 = '4t105 12b135 20b165 28t120 36t120 44b129 52t114 60b165 310t123 319b132 391t120 407t120 415t124 423t125 431b129 440b138 448t108 456b129 464t124 472b135 488b132 497t96 504t114 578b153 585t114 593b129 601b132 617t120 691b132 698t120 731b132 739t117 747t123 755t123 763t125 771b156 779t123 859t123 884b138 1020b132 1028t123 1036t114 1052t114 1296t96 1303t75 1319t105 1327b129 1335t93 1344b141 1352b168';
  var drawBars = function (str, fx) {
    str.split(' ').forEach(function (b) {
      var m = b.match(/(\d+)([tb])(\d+)/), x = fx(+m[1]), v = +m[3];
      var h = Math.abs(v - 126) / 3;
      e += '<rect x="' + (x - 1.5) + '" y="' + (m[2] === 't' ? 1612 - h : 1612) + '" width="3" height="' + h + '" fill="' + (m[2] === 't' ? '#95ba5e' : '#7a5f9a') + '"/>';
    });
  };
  drawBars(bars1, toX1); drawBars(bars2, toX2);
  /* vol / position */
  var base = 1723;
  var blk = [[158,170,270],[191,202,268],[433,452,304],[530,581,304],[610,663,297],[732,791,289],[836,865,272],[941,952,310],[982,1001,302],[1150,1162,308],[1167,1187,300],[1264,1323,304],[1352,1429,300],[1449,1485,297],[1506,1517,292],[1545,1560,286]].map(function (b) { return [toX1(b[0]), toX1(b[1]), b[2]]; });
  blk.push([toX1(1562), toX2(55), 280]);
  [[293,313,310],[374,500,304],[567,612,287],[680,773,286],[850,877,296],[1012,1047,300],[1286,1297,339],[1302,1347,333]].forEach(function (b) { blk.push([toX2(b[0]), toX2(b[1]), b[2]]); });
  blk.forEach(function (b) {
    var top = 1570 + b[2] / 3;
    e += '<rect x="' + b[0] + '" y="' + (top + 1) + '" width="' + (b[1] - b[0]) + '" height="' + (base - top - 1) + '" fill="#f7a35c"/>';
    e += '<rect x="' + (b[0] + 1) + '" y="' + top + '" width="' + (b[1] - b[0] - 3) + '" height="' + (base - top) + '" fill="#a0a3ec"/>';
    e += '<rect x="' + (b[0] + 1) + '" y="' + top + '" width="' + (b[1] - b[0] - 3) + '" height="1.2" fill="#c4c6f4"/>';
  });
  e += '<line x1="28" x2="1705" y1="1723.500" y2="1723.500" stroke="#2b8fc0" stroke-width="1.500"/>';
  /* utilization */
  var low = 1801;
  var u = [[167,175,514],[200,208,523],[442,458,520],[539,587,520],[619,668,517],[740,797,516],[845,870,515],[950,958,526],[990,1007,518],[1160,1168,523],[1176,1192,514],[1273,1330,519],[1361,1434,519],[1458,1491,519],[1515,1523,515],[1555,1563,520]].map(function (b) { return [toX1(b[0]), toX1(b[1]), b[2]]; });
  u.push([toX2(2), toX2(60), 515]);
  [[302,318,518],[383,504,518],[577,617,514],[690,779,516],[859,884,518],[1021,1053,517],[1295,1304,522],[1311,1352,519]].forEach(function (b) { u.push([toX2(b[0]), toX2(b[1]), b[2]]); });
  var d = 'M30 ' + low;
  u.forEach(function (b) { var y = (1570 + b[2] / 3).toFixed(1); d += 'H' + b[0].toFixed(1) + 'V' + y + 'H' + b[1].toFixed(1) + 'V' + low; });
  d += 'H1705';
  e += '<path d="' + d + '" fill="none" stroke="#d2ccb0" stroke-width="1.500"/><path d="' + d + '" fill="none" stroke="#5c4f0c" stroke-width="1"/>';
  /* x axis */
  e += '<line x1="28" x2="1708" y1="1802.500" y2="1802.500" stroke="#c5d3e6" stroke-width="1.200"/>';
  [["Jan '23",160.7],["Feb '23",299.7],["Mar '23",426],["Apr '23",565],["May '23",700],["Jun '23",840],["Jul '23",975.5],["Aug '23",1115.5],["Sep '23",1254.5],["Oct '23",1389.5],["Nov '23",1529.5],["Dec '23",1664.6]].forEach(function (t) {
    e += '<line x1="' + t[1] + '" x2="' + t[1] + '" y1="1802" y2="1811" stroke="#ccd6eb"/>';
    e += '<text class="hc-label hc-mid" x="' + t[1] + '" y="1821">' + t[0] + '</text>';
  });
  /* legend */
  [[560,'#7cb5ec','PnL',575],[623,'#90ed7d','Period P&amp;L',636],[731,'#f7a35c','Trade Vol',744],[831.5,'#8085e9','Position long',845],[954,'#f15c80','Position short',967]].forEach(function (l) {
    e += '<circle cx="' + l[0] + '" cy="1823" r="6" fill="' + l[1] + '"/><text class="hc-legend" x="' + l[3] + '" y="1827">' + l[2] + '</text>';
  });
  e += '<line x1="1073" x2="1090" y1="1823" y2="1823" stroke="#aca67e" stroke-width="2"/><text class="hc-legend" x="1095" y="1827">Asset utilization</text>';
  /* navigator */
  e += '<rect x="27" y="1848" width="1681" height="20" fill="#c6d3e5" stroke="#c3c6cc"/>';
  [["Jan '23",159],["Mar '23",425],["May '23",701],["Jul '23",975],["Sep '23",1255],["Nov '23",1532]].forEach(function (t) {
    e += '<line x1="' + t[1] + '" x2="' + t[1] + '" y1="1849" y2="1868" stroke="#bccade"/><text class="hc-nav" x="' + (t[1] + 3) + '" y="1864">' + t[0] + '</text>';
  });
  [23.5,1704].forEach(function (x) {
    e += '<rect x="' + x + '" y="1850.500" width="7.500" height="15.500" rx="1" fill="#f2f2f2" stroke="#999"/>';
    e += '<path d="M' + (x + 3) + ' 1854V1863M' + (x + 5) + ' 1854V1863" stroke="#999" fill="none"/>';
  });
  document.getElementById('earn-svg').innerHTML = e;
})();
```
